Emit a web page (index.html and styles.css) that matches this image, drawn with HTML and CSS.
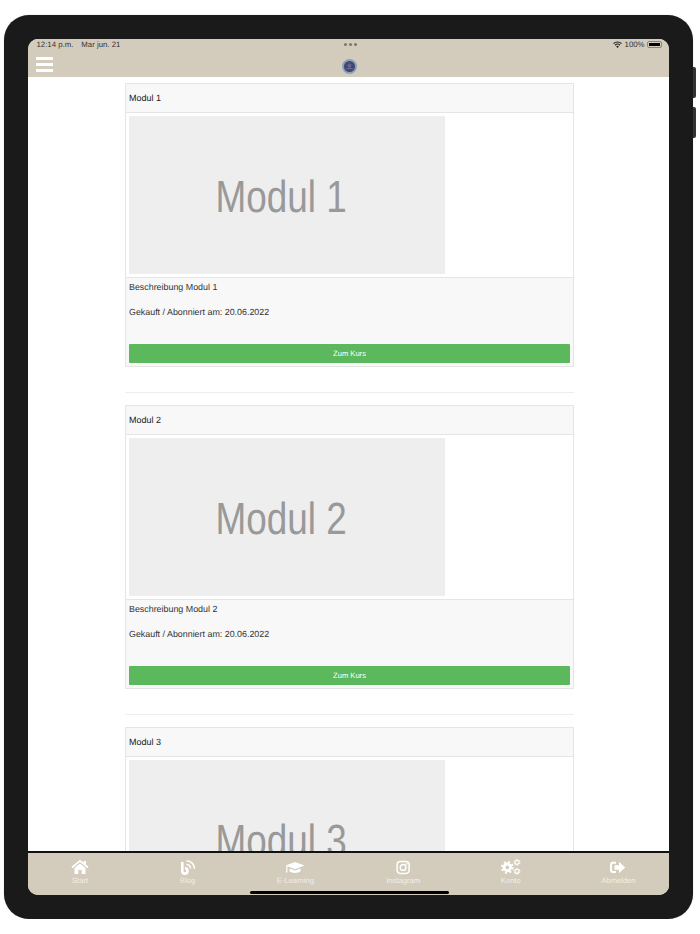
FILE: index.html
```html
<!DOCTYPE html>
<html lang="de">
<head>
    <meta charset="UTF-8">
    <meta name="viewport" content="width=device-width, initial-scale=1.0">
    <title>Meine Kurse</title>
    <link rel="stylesheet" href="styles.css">
</head>
<body>

<div class="device">
    <span class="side-button side-button-top"></span>
    <span class="side-button side-button-bottom"></span>

    <div class="screen">
        <header class="app-header">
            <div class="status-bar">
                <div class="status-left">
                    <span>12:14 p.m.</span>
                    <span>Mar jun. 21</span>
                </div>
                <div class="status-dots"><i></i><i></i><i></i></div>
                <div class="status-right">
                    <svg class="wifi" viewBox="0 0 12 9">
                        <path d="M6 9 4.2 7a2.600 2.600 0 0 1 3.600 0zM3.200 6 2.200 4.900a5.500 5.500 0 0 1 7.600 0L8.800 6a4 4 0 0 0-5.600 0zM1.200 3.900 0 2.800a8.700 8.700 0 0 1 12 0l-1.200 1.100a7 7 0 0 0-9.600 0z"/>
                    </svg>
                    <span>100%</span>
                    <span class="battery"><span class="battery-level"></span></span>
                </div>
            </div>
            <div class="nav-bar">
                <div class="hamburger"><span></span><span></span><span></span></div>
                <svg class="logo" viewBox="0 0 16 16">
                    <circle cx="8" cy="8" r="8" fill="#86a2bf"/>
                    <circle cx="8" cy="8" r="5.900" fill="#45456f"/>
                    <circle cx="8" cy="7" r="2.200" fill="#62638a"/>
                    <path d="M4.500 11c1-1.600 6-1.600 7 0" fill="none" stroke="#7a7c98" stroke-width="1"/>
                </svg>
            </div>
        </header>

        <main class="content">
            <section class="card">
                <h3 class="card-title">Modul 1</h3>
                <div class="card-image-wrap">
                    <div class="card-image"><span>Modul 1</span></div>
                </div>
                <div class="card-footer">
                    <p>Beschreibung Modul 1</p>
                    <p>Gekauft / Abonniert am: 20.06.2022</p>
                    <a class="btn" href="#">Zum Kurs</a>
                </div>
            </section>
            <hr class="divider">
            <section class="card">
                <h3 class="card-title">Modul 2</h3>
                <div class="card-image-wrap">
                    <div class="card-image"><span>Modul 2</span></div>
                </div>
                <div class="card-footer">
                    <p>Beschreibung Modul 2</p>
                    <p>Gekauft / Abonniert am: 20.06.2022</p>
                    <a class="btn" href="#">Zum Kurs</a>
                </div>
            </section>
            <hr class="divider">
            <section class="card">
                <h3 class="card-title">Modul 3</h3>
                <div class="card-image-wrap">
                    <div class="card-image"><span>Modul 3</span></div>
                </div>
            </section>
        </main>

        <nav class="tab-bar">
            <a class="tab" href="#">
                <svg class="tab-icon" viewBox="0 0 24 20">
                    <path d="M6.500 11 12 6.500l5.500 4.500v6h-3.800v-4h-3.400v4H6.500z"/>
                    <path d="M4 10.500 12 3.800l8 6.700" fill="none" stroke="#fff" stroke-width="1.800"/>
                    <path d="M15.500 4H18v4.500l-2.500-2z"/>
                </svg>
                <span>Start</span>
            </a>
            <a class="tab" href="#">
                <svg class="tab-icon" viewBox="0 0 24 20">
                    <path d="M6.300 5v9a2.600 2.600 0 1 0 2.600-2.600" fill="none" stroke="#fff" stroke-width="2.600"/>
                    <path d="M10.500 7.500a4 4 0 0 1 4 4M10.500 3.800a8 8 0 0 1 8 8" fill="none" stroke="#fff" stroke-width="1.600"/>
                </svg>
                <span>Blog</span>
            </a>
            <a class="tab" href="#">
                <svg class="tab-icon" viewBox="0 0 24 20">
                    <path d="M12 5l9.500 3.600L12 12.200 2.500 8.600z"/>
                    <path d="M6.500 11.500 12 13.600l5.500-2.100v2.700c-2 2.300-9 2.300-11 0z"/>
                    <path d="M3.200 9h1.200v6.500H3.200z"/>
                </svg>
                <span>E-Learning</span>
            </a>
            <a class="tab" href="#">
                <svg class="tab-icon" viewBox="0 0 24 20">
                    <rect x="6.100" y="4.400" width="12" height="12" rx="3.300" fill="none" stroke="#fff" stroke-width="1.500"/>
                    <circle cx="12.100" cy="10.400" r="2.900" fill="none" stroke="#fff" stroke-width="1.400"/>
                    <circle cx="15.600" cy="6.900" r=".8"/>
                </svg>
                <span>Instagram</span>
            </a>
            <a class="tab" href="#">
                <svg class="tab-icon" viewBox="0 0 24 20">
                    <circle cx="8.300" cy="10.300" r="3.300" fill="none" stroke="#fff" stroke-width="2.800"/>
                    <circle cx="8.300" cy="10.300" r="5.400" fill="none" stroke="#fff" stroke-width="2" stroke-dasharray="2.100 2.140"/>
                    <circle cx="18" cy="5.300" r="2" fill="none" stroke="#fff" stroke-width="1.200"/>
                    <circle cx="18" cy="5.300" r="3" fill="none" stroke="#fff" stroke-width="1" stroke-dasharray="1.500 1.640"/>
                    <circle cx="18" cy="14.300" r="2" fill="none" stroke="#fff" stroke-width="1.200"/>
                    <circle cx="18" cy="14.300" r="3" fill="none" stroke="#fff" stroke-width="1" stroke-dasharray="1.500 1.640"/>
                </svg>
                <span>Konto</span>
            </a>
            <a class="tab" href="#">
                <svg class="tab-icon" viewBox="0 0 24 20">
                    <path d="M10 5.700H7a2 2 0 0 0-2 2v5.200a2 2 0 0 0 2 2h3" fill="none" stroke="#fff" stroke-width="2"/>
                    <path d="M8.500 8.200H13V4.800l6.200 5.700L13 16.200v-3.400H8.500z"/>
                </svg>
                <span>Abmelden</span>
            </a>
        </nav>

        <div class="home-indicator"></div>
    </div>
</div>

</body>
</html>
```

FILE: styles.css
```css
body {
    font-family: "Liberation Sans", Arial, sans-serif;
    text-rendering: geometricPrecision;
    margin: 0;
    padding: 0;
    background-color: #fff;
}
.device {
    position: relative;
    box-sizing: border-box;
    width: 689px;
    height: 904px;
    margin: 15px 0 0 4px;
    padding: 24px;
    background-color: #1a1a1a;
    border-radius: 25px;
    box-shadow: 0 0 1px #999;
}
.side-button {
    position: absolute;
    left: 689px;
    width: 3px;
    height: 31px;
    background-color: #333;
    border-radius: 0 2px 2px 0;
}
.side-button-top {
    top: 52px;
}
.side-button-bottom {
    top: 92px;
}
.screen {
    position: relative;
    display: flex;
    flex-direction: column;
    width: 641px;
    height: 856px;
    overflow: hidden;
    background-color: #fff;
    border-radius: 10px;
}

/* Kopfbereich */
.app-header {
    flex: none;
    height: 38px;
    background-color: #d3ccbc;
}
.status-bar {
    display: grid;
    grid-template-columns: 1fr auto 1fr;
    align-items: center;
    height: 11px;
    padding: 0 7px 0 8.5px;
    font-size: 7.8px;
    color: #333;
}
.status-left {
    display: flex;
    gap: 8px;
}
.status-dots {
    display: flex;
    gap: 1.8px;
    margin-left: 2px;
}
.status-dots i {
    width: 3px;
    height: 3px;
    border-radius: 50%;
    background-color: #777;
}
.status-right {
    display: flex;
    justify-content: flex-end;
    align-items: center;
    gap: 2.5px;
}
.wifi {
    width: 9px;
    height: 7px;
    fill: #222;
}
.battery {
    box-sizing: border-box;
    display: block;
    width: 15px;
    height: 7px;
    padding: 1px;
    border: 1px solid #8a8578;
    border-radius: 2px;
}
.battery-level {
    display: block;
    height: 100%;
    background-color: #000;
}
.nav-bar {
    position: relative;
    display: flex;
    justify-content: center;
    padding-top: 9px;
}
.hamburger {
    position: absolute;
    left: 8px;
    top: 7px;
    display: flex;
    flex-direction: column;
    gap: 3px;
    width: 17px;
}
.hamburger span {
    height: 3px;
    background-color: #fff;
}
.logo {
    width: 15px;
    height: 15px;
    margin-left: 2px;
}

/* Module */
.content {
    flex: 1;
    min-height: 0;
    overflow: hidden;
    padding: 6px 95px 0 97px;
}
.card {
    border: 1px solid #e5e5e5;
}
.card-title {
    margin: 0;
    padding: 0 3px;
    height: 28px;
    line-height: 29px;
    font-size: 9px;
    font-weight: normal;
    color: #222;
    background-color: #f8f8f8;
    border-bottom: 1px solid #e5e5e5;
}
.card-image-wrap {
    padding: 3px;
}
.card-image {
    box-sizing: border-box;
    display: flex;
    align-items: center;
    justify-content: center;
    width: 316px;
    height: 158px;
    padding: 4px 11px 0 0;
    background-color: #eeeeee;
    overflow: hidden;
}
.card-image span {
    font-size: 45px;
    color: #999;
    transform: scaleX(0.82);
}
.card-footer {
    height: 88px;
    padding: 0 3px;
    font-size: 8.9px;
    color: #333;
    background-color: #f8f8f8;
    border-top: 1px solid #e5e5e5;
}
.card-footer p {
    margin: 0;
    height: 25px;
    line-height: 19px;
}
.btn {
    display: block;
    margin-top: 16px;
    height: 19px;
    line-height: 19px;
    text-align: center;
    font-size: 7.6px;
    color: #fff;
    text-decoration: none;
    background-color: #5cb85c;
    border-radius: 1px;
}
.divider {
    margin: 25px 0 12px;
    height: 1px;
    border: 0;
    background-color: #eee;
}

/* Tableiste */
.tab-bar {
    flex: none;
    display: grid;
    grid-template-columns: repeat(6, 107.7px);
    justify-content: center;
    height: 42px;
    padding-left: 1.5px;
    background-color: #d3ccbc;
    border-top: 2px solid #111;
}
.tab {
    display: flex;
    flex-direction: column;
    align-items: center;
    padding-top: 4px;
    font-size: 7.6px;
    line-height: 8px;
    color: #f1eee7;
    text-decoration: none;
}
.tab-icon {
    width: 24px;
    height: 20px;
    fill: #fff;
}
.home-indicator {
    position: absolute;
    left: 222px;
    bottom: 1px;
    width: 199px;
    height: 3px;
    background-color: #000;
    border-radius: 2px;
}
```
